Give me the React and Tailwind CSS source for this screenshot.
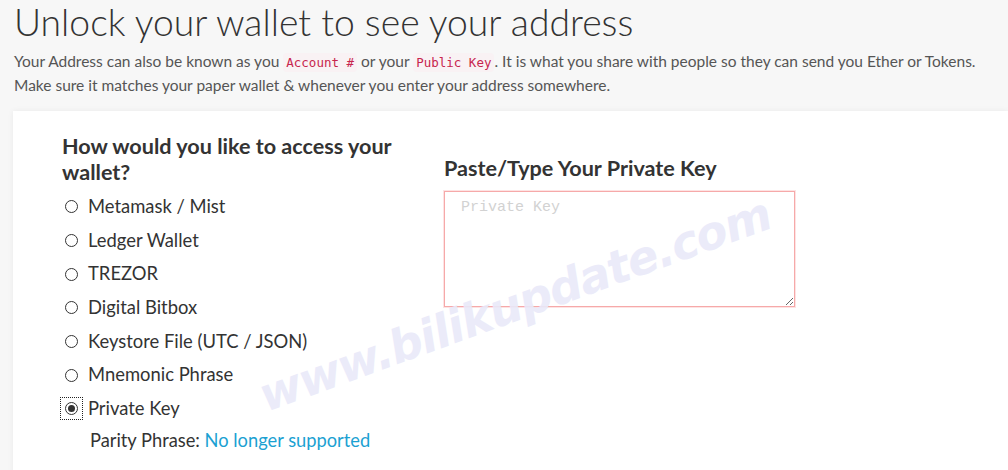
import React, { useState } from 'react';

const options = [
  'Metamask / Mist',
  'Ledger Wallet',
  'TREZOR',
  'Digital Bitbox',
  'Keystore File (UTC / JSON)',
  'Mnemonic Phrase',
  'Private Key',
];

const Code = ({ children }) => (
  <code className="font-['DejaVu_Sans_Mono',monospace] text-[12.5px] text-[#c7254e] bg-[#f9f2f4] px-[3px] py-[2px] rounded-sm">
    {children}
  </code>
);

const App = () => {
  const [selected, setSelected] = useState('Private Key');

  return (
    <div className="relative w-[1008px] h-[470px] overflow-hidden bg-[#f7f7f7] font-['Lato',sans-serif] text-[#333]">
      <div className="px-[14px]">
        <h1 className="text-[37.3px] font-light leading-[44px] text-[#333]">
          Unlock your wallet to see your address
        </h1>
        <p className="text-[15.5px] leading-[22px] text-[#555] mt-[6px] whitespace-nowrap">
          Your Address can also be known as you <Code>Account #</Code> or your <Code>Public Key</Code>. It is what you share with people so they can send you Ether or Tokens.
          <br />
          Make sure it matches your paper wallet &amp; whenever you enter your address somewhere.
        </p>
      </div>

      <div className="ml-[13px] mt-[15px] bg-white shadow-[0_0_6px_rgba(0,0,0,0.06)] h-[400px] pl-[49px] pt-[22px] flex">
        <div className="w-[382px]">
          <h3 className="text-[21.6px] font-bold leading-[26px] text-[#333] w-[350px]">
            How would you like to access your wallet?
          </h3>
          <div className="mt-[5px] flex flex-col">
            {options.map((opt) => {
              const on = selected === opt;
              return (
                <label
                  key={opt}
                  onClick={() => setSelected(opt)}
                  className="flex items-center h-[33.7px] cursor-pointer"
                >
                  <span
                    className={
                      on
                        ? 'ml-[-1px] mr-[6px] w-[21px] h-[21px] flex items-center justify-center outline-1 outline-dotted outline-[#222]'
                        : 'ml-[-1px] mr-[6px] w-[21px] h-[21px] flex items-center justify-center'
                    }
                  >
                    <span className="w-[13px] h-[13px] rounded-full border border-[#333] bg-white flex items-center justify-center">
                      {on && <span className="w-[7px] h-[7px] rounded-full bg-[#333]" />}
                    </span>
                  </span>
                  <span className="text-[18.4px] text-[#333]">{opt}</span>
                </label>
              );
            })}
          </div>
          <p className="mt-[1px] ml-[28px] text-[18.3px] leading-[26px] text-[#333]">
            Parity Phrase: <a className="text-[#1ba1d2]">No longer supported</a>
          </p>
        </div>

        <div className="pt-[22px]">
          <h3 className="text-[21.6px] font-bold leading-[26px] text-[#333]">
            Paste/Type Your Private Key
          </h3>
          <textarea
            placeholder="Private Key"
            className="mt-[10px] w-[351px] h-[116px] block border border-[#f6a9a9] shadow-[0_0_0_1px_#fde3e3] px-[16px] py-[5px] font-['Liberation_Mono',monospace] text-[15px] text-[#333] placeholder:text-[#d2d2d2] outline-none resize-y"
          />
        </div>
      </div>

      <div className="pointer-events-none absolute left-[515px] top-[305px] -translate-x-1/2 -translate-y-1/2 -rotate-[20deg] whitespace-nowrap font-['DejaVu_Sans',sans-serif] font-bold italic text-[46px] tracking-[-1px] text-[#e9e9f9] opacity-90">
        www.bilikupdate.com
      </div>
    </div>
  );
};

export default App;
